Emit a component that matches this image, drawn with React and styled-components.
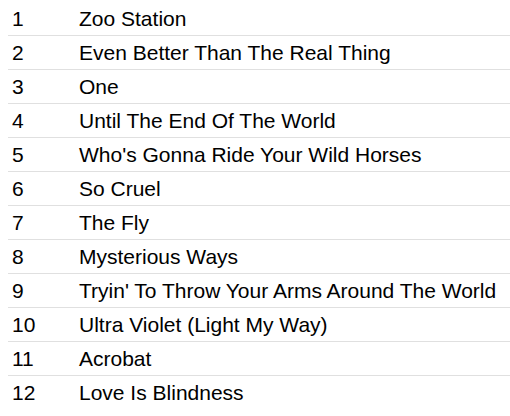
import React from 'react';
import styled, { createGlobalStyle } from 'styled-components';

const tracks = [
    'Zoo Station',
    'Even Better Than The Real Thing',
    'One',
    'Until The End Of The World',
    "Who's Gonna Ride Your Wild Horses",
    'So Cruel',
    'The Fly',
    'Mysterious Ways',
    "Tryin' To Throw Your Arms Around The World",
    'Ultra Violet (Light My Way)',
    'Acrobat',
    'Love Is Blindness',
];

const GlobalStyle = createGlobalStyle`
    html, body {
        margin: 0;
        overflow: hidden;
        background: #fff;
    }
    body {
        padding-left: 8px;
        font-family: "Liberation Sans", Arial, sans-serif;
    }
`;

const TrackList = styled.div`
    margin-top: 2px;
    width: 502px;
    display: flex;
    flex-direction: column;
`;

const Row = styled.div`
    display: grid;
    grid-template-columns: 67px 1fr;
    height: 33px;
    padding: 0 0 0 4px;
    border-bottom: ${(p) => (p.last ? 'none' : '1px solid #e0e0e0')};
    font-size: 21px;
    line-height: 24px;
    color: #000;
`;

const Cell = styled.div`
    padding-top: 5px;
    white-space: nowrap;
`;

const App = () => (
    <>
        <GlobalStyle />
        <TrackList>
            {tracks.map((title, i) => (
                <Row key={title} last={i === tracks.length - 1}>
                    <Cell>{i + 1}</Cell>
                    <Cell>{title}</Cell>
                </Row>
            ))}
        </TrackList>
    </>
);

export default App;
